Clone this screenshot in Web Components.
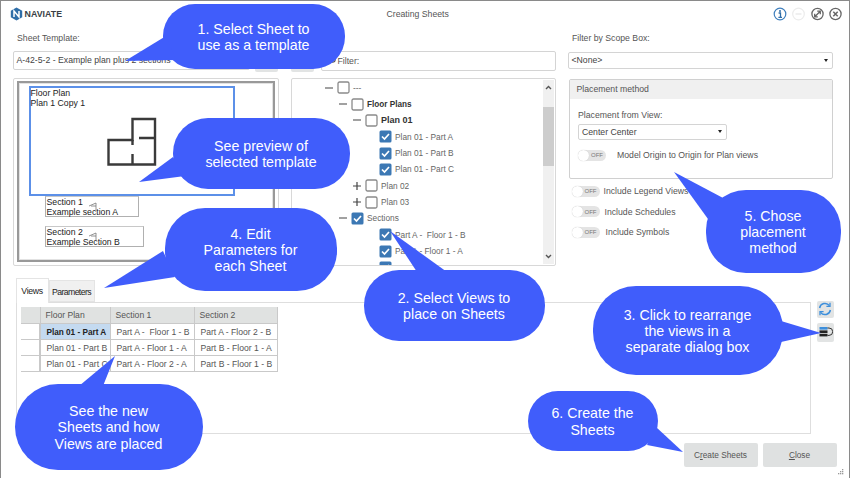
<!DOCTYPE html>
<html>
<head>
<meta charset="utf-8">
<title>Creating Sheets</title>
<style>
	html, body { margin: 0; padding: 0; background: white; }
	body { width: 850px; height: 478px; overflow: hidden; font: 8.7px "Liberation Sans", Arial, sans-serif; color: #555; }
</style>
</head>
<body>
<sheet-window>
	<win-title slot="title">Creating Sheets</win-title>

	<span slot="label-left">Sheet Template:</span>
	<span slot="label-right">Filter by Scope Box:</span>

	<win-combo slot="template" style="width:237px;height:19px">A-42-5-2 - Example plan plus 2 sections</win-combo>
	<filter-box slot="filter"></filter-box>
	<win-combo slot="scope" arrow style="height:17px;margin-top:1px">&lt;None&gt;</win-combo>

	<sheet-preview slot="preview"></sheet-preview>

	<view-tree slot="tree">
		<tree-row level="0" exp="minus">---</tree-row>
		<tree-row level="1" exp="minus" bold>Floor Plans</tree-row>
		<tree-row level="2" exp="minus" bold>Plan 01</tree-row>
		<tree-row level="3" checked>Plan 01 - Part A</tree-row>
		<tree-row level="3" checked>Plan 01 - Part B</tree-row>
		<tree-row level="3" checked>Plan 01 - Part C</tree-row>
		<tree-row level="2" exp="plus">Plan 02</tree-row>
		<tree-row level="2" exp="plus">Plan 03</tree-row>
		<tree-row level="1" exp="minus" checked>Sections</tree-row>
		<tree-row level="3" checked>Part A -  Floor 1 - B</tree-row>
		<tree-row level="3" checked>Part A - Floor 1 - A</tree-row>
		<tree-row level="3" checked></tree-row>
	</view-tree>

	<placement-panel slot="placement"></placement-panel>

	<sheet-table slot="table"></sheet-table>

	<side-button slot="side" kind="refresh" style="height:17px"></side-button>
	<side-button slot="side" kind="arrange" style="height:19px"></side-button>

	<win-button slot="buttons"><span>C<u>r</u>eate Sheets</span></win-button>
	<win-button slot="buttons"><span><u>C</u>lose</span></win-button>

	<note-bubble slot="notes" box="163,4,182,65,32" tail="166,36 125,61 176,60">1. Select Sheet to<br>use as a template</note-bubble>
	<note-bubble slot="notes" box="173,118,177,71,35" tail="173,157 139,182 185,176">See preview of<br>selected template</note-bubble>
	<note-bubble slot="notes" box="165,208,172,83,40" tail="163,251 104,288 175,277">4. Edit<br>Parameters for<br>each Sheet</note-bubble>
	<note-bubble slot="notes" box="364,270,181,71,35" tail="417,272 390,231 447,272">2. Select Views to<br>place on Sheets</note-bubble>
	<note-bubble slot="notes" box="593,286,190,89,43" tail="781,321 821,333 781,342">3. Click to rearrange<br>the views in a<br>separate dialog box</note-bubble>
	<note-bubble slot="notes" box="706,190,135,83,40" tail="725,199 674,172 708,219">5. Chose<br>placement<br>method</note-bubble>
	<note-bubble slot="notes" box="528,391,130,60,30" tail="656,427 683,452 647,445">6. Create the<br>Sheets</note-bubble>
	<note-bubble slot="notes" box="15,384,188,86,43" tail="79,386 115,356 103,386">See the new<br>Sheets and how<br>Views are placed</note-bubble>
</sheet-window>

<script>
"use strict"

function shadow(el, html) {
	el.attachShadow({ mode: "open" }).innerHTML = html
}

class SheetWindow extends HTMLElement {
	constructor() {
		super()
		shadow(this, `
			<style>
				:host {
					display: flex;
					flex-direction: column;
					position: relative;
					box-sizing: border-box;
					width: 850px;
					height: 478px;
					border: 1.5px solid #8a8a8a;
					border-bottom: 0;
				}
				.top {
					display: grid;
					grid-template-columns: 266px 265px 265px;
					grid-template-rows: 23px 27px 188px;
					column-gap: 12px;
					padding-left: 11.5px;
				}
				.label { line-height: 20px; padding-left: 4.5px; }
				.right { margin: 1px 0 0 1px; }
				.cell { display: flex; gap: 5px; align-items: flex-start; }
				.stub {
					width: 23px;
					height: 21px;
					background: #e2e4e4;
					border-radius: 2px;
				}
				.filter-cell { gap: 7px; }
				.bottom {
					display: flex;
					margin: 12px 0 0 14.5px;
					gap: 6px;
				}
				.tabs-wrap { width: 795px; display: flex; flex-direction: column; }
				.strip { display: flex; height: 24px; align-items: flex-end; }
				.tab {
					box-sizing: border-box;
					color: #222;
					text-align: center;
				}
				.tab.on {
					position: relative;
					width: 33px;
					height: 25px;
					line-height: 24px;
					letter-spacing: -.35px;
					margin-bottom: -1px;
					background: white;
					border: 1px solid #e4e4e4;
					border-bottom: 0;
				}
				.tab.off {
					width: 46px;
					height: 22px;
					line-height: 22px;
					letter-spacing: -.6px;
					background: #f0f0f0;
					border: 1px solid #e4e4e4;
				}
				.pane {
					box-sizing: border-box;
					height: 132px;
					border: 1px solid #dedede;
					padding: 4px;
				}
				.side {
					display: flex;
					flex-direction: column;
					gap: 5px;
					padding-top: 23px;
				}
				.foot {
					display: flex;
					justify-content: flex-end;
					gap: 5px;
					margin-top: 9px;
					padding-right: 12.5px;
				}
				.grip { position: absolute; right: 5px; bottom: 2px; }
			</style>
			<slot name="title"></slot>
			<div class="top">
				<div class="label"><slot name="label-left"></slot></div>
				<div></div>
				<div class="label"><slot name="label-right"></slot></div>
				<div class="cell"><slot name="template"></slot><div class="stub"></div></div>
				<div class="cell filter-cell"><div class="stub"></div><slot name="filter"></slot></div>
				<div class="cell" style="display:block"><slot name="scope"></slot></div>
				<slot name="preview"></slot>
				<slot name="tree"></slot>
				<div class="right"><slot name="placement"></slot></div>
			</div>
			<div class="bottom">
				<div class="tabs-wrap">
					<div class="strip">
						<div class="tab on">Views</div>
						<div class="tab off">Parameters</div>
					</div>
					<div class="pane"><slot name="table"></slot></div>
				</div>
				<div class="side"><slot name="side"></slot></div>
			</div>
			<div class="foot"><slot name="buttons"></slot></div>
			<svg class="grip" width="7" height="7" fill="#999">
				<rect x="5" y="0" width="1.3" height="1.3"/>
				<rect x="3" y="2" width="1.3" height="1.3"/><rect x="5" y="2" width="1.3" height="1.3"/>
				<rect x="1" y="4" width="1.3" height="1.3"/><rect x="3" y="4" width="1.3" height="1.3"/><rect x="5" y="4" width="1.3" height="1.3"/>
			</svg>
			<slot name="notes"></slot>
		`)
	}
}

class WinTitle extends HTMLElement {
	constructor() {
		super()
		shadow(this, `
			<style>
				:host {
					display: grid;
					grid-template-columns: 377px auto 1fr;
					align-items: center;
					height: 26.5px;
					padding: 0 7px 0 8.5px;
				}
				.logo { display: flex; align-items: center; gap: 2px; }
				.brand { font-size: 8.8px; font-weight: bold; color: #3a3f45; letter-spacing: .05px; }
				.icons { display: flex; justify-content: flex-end; gap: 5.5px; }
			</style>
			<div class="logo">
				<svg width="13" height="14" viewBox="0 0 13 14">
					<path d="M6.5 .5 12.2 3.7V10.3L6.5 13.5 .8 10.3V3.7Z" fill="#2f6ea8"/>
					<path d="M4 10V4L9 10V4" fill="none" stroke="#fff" stroke-width="1.5"/>
				</svg>
				<span class="brand">NAVIATE</span>
			</div>
			<div class="name"><slot></slot></div>
			<div class="icons">
				<svg width="14" height="14" viewBox="0 0 14 14">
					<circle cx="7" cy="7" r="5.8" fill="none" stroke="#3f7fbd" stroke-width="1.2"/>
					<path d="M5.6 6H7.5V10.2M5.4 10.4H9" fill="none" stroke="#2f6ea8" stroke-width="1.3"/>
					<circle cx="7" cy="3.9" r="1" fill="#2f6ea8"/>
				</svg>
				<svg width="13" height="14" viewBox="0 0 13 14">
					<circle cx="6.5" cy="7" r="5.8" fill="none" stroke="#ececec" stroke-width="1.2"/>
					<path d="M3.5 7H9.5" stroke="#e6e6e6" stroke-width="1.2"/>
				</svg>
				<svg width="13" height="14" viewBox="0 0 13 14">
					<circle cx="6.5" cy="7" r="5.6" fill="none" stroke="#666" stroke-width="1.3"/>
					<path d="M4 9.5 9 4.5M6.2 4.2H9.3V7.3M3.7 6.7V9.8H6.8" fill="none" stroke="#666" stroke-width="1.3"/>
				</svg>
				<svg width="13" height="14" viewBox="0 0 13 14">
					<circle cx="6.5" cy="7" r="5.6" fill="none" stroke="#666" stroke-width="1.3"/>
					<path d="M4.3 4.8 8.7 9.2M8.7 4.8 4.3 9.2" stroke="#666" stroke-width="1.5"/>
				</svg>
			</div>
		`)
	}
}

class WinCombo extends HTMLElement {
	constructor() {
		super()
		shadow(this, `
			<style>
				:host {
					display: flex;
					align-items: center;
					justify-content: space-between;
					box-sizing: border-box;
					background: white;
					border: 1px solid #d4d4d4;
					border-radius: 2px;
					padding: 0 4px 0 3px;
					color: #444;
				}
				i {
					width: 0;
					height: 0;
					border: 2.5px solid transparent;
					border-top: 3px solid #222;
					border-bottom: 0;
				}
			</style>
			<span><slot></slot></span>
			${this.hasAttribute("arrow") ? "<i></i>" : ""}
		`)
	}
}

class FilterBox extends HTMLElement {
	constructor() {
		super()
		shadow(this, `
			<style>
				:host {
					display: flex;
					align-items: center;
					gap: 2px;
					box-sizing: border-box;
					width: 235px;
					height: 20px;
					background: white;
					border: 1px solid #d4d4d4;
					border-radius: 2px;
					padding-left: 5px;
				}
			</style>
			<svg width="9" height="9" viewBox="0 0 9 9" fill="none" stroke="#555" stroke-width="1.1">
				<circle cx="5.5" cy="3.5" r="2.7"/><path d="M3.5 5.5 .8 8.2"/>
			</svg>
			<span>Filter:</span>
		`)
	}
}

class SheetPreview extends HTMLElement {
	constructor() {
		super()
		shadow(this, `
			<style>
				:host {
					display: block;
					box-sizing: border-box;
					border: 1px solid #d8d8d8;
					border-radius: 2px;
					padding: 2px 3px 3px;
					color: #222;
				}
				.sheet {
					position: relative;
					box-sizing: border-box;
					height: 100%;
					border: 2px solid #999;
					box-shadow: inset 0 0 0 1px #e2e2e2;
					background: white;
				}
				.view {
					position: absolute;
					box-sizing: border-box;
					line-height: 10.5px;
				}
				.plan {
					left: 10px; top: 3px;
					width: 206px; height: 110px;
					border: 2px solid #5c90e8;
				}
				.sec { border: 1px solid #b0b0b0; border-top-color: #c8c8c8; background: white; padding-left: 1px; }
				.plan svg { position: absolute; left: 76px; top: 29px; }
				.sec svg { position: absolute; left: 42px; top: 5px; }
			</style>
			<div class="sheet">
				<div class="view sec" style="left:26px;top:113px;width:94px;height:21.5px">Section 1<br>Example section A
					<svg width="10" height="9" fill="none" stroke="#777" stroke-width=".8"><path d="M1 4 8 1V8M8 4H3"/></svg>
				</div>
				<div class="view sec" style="left:26px;top:143px;width:99px;height:21.5px">Section 2<br>Example Section B
					<svg width="10" height="9" fill="none" stroke="#777" stroke-width=".8"><path d="M1 4 8 1V8M8 4H3"/></svg>
				</div>
				<div class="view plan">Floor Plan<br>Plan 1 Copy 1
					<svg width="50" height="50" viewBox="0 0 50 50" fill="none" stroke="#3a3a3a" stroke-width="2.4">
						<path d="M1.5 23H25.5V2H48V47.5H1.5Z"/>
						<path d="M25.5 23V28M32 21H48M25.5 37V47.5"/>
					</svg>
				</div>
			</div>
		`)
	}
}

class ViewTree extends HTMLElement {
	constructor() {
		super()
		shadow(this, `
			<style>
				:host {
					display: flex;
					box-sizing: border-box;
					height: 188px;
					border: 1px solid #d8d8d8;
					border-radius: 2px;
					overflow: hidden;
				}
				.rows { flex: 1; padding-top: 1px; overflow: hidden; }
				.bar {
					width: 11px;
					margin: 1px 1px 1px 0;
					background: #f0f0f0;
					display: flex;
					flex-direction: column;
					align-items: center;
				}
				.bar svg { flex: none; margin: 5px 0; }
				.thumb { width: 11px; height: 59px; background: #cdcdcd; margin: 12px 0 auto; }
			</style>
			<div class="rows"><slot></slot></div>
			<div class="bar">
				<svg width="7" height="5" fill="none" stroke="#555" stroke-width="1.4"><path d="M1 4 3.5 1.5 6 4"/></svg>
				<div class="thumb"></div>
				<svg width="7" height="5" fill="none" stroke="#555" stroke-width="1.4"><path d="M1 1 3.5 3.5 6 1"/></svg>
			</div>
		`)
	}
}

class TreeRow extends HTMLElement {
	constructor() {
		super()
		const level = Number(this.getAttribute("level"))
		const exp = this.getAttribute("exp")
		let expander = ""
		if (exp == "minus") expander = `<path d="M1 6H9" stroke="#444" stroke-width="1.2"/>`
		if (exp == "plus") expander = `<path d="M1 6H9M5 2V10" stroke="#444" stroke-width="1.2"/>`
		const box = this.hasAttribute("checked")
			? `<svg class="box" width="13" height="13"><rect x=".5" y=".5" width="12" height="12" rx="1.5" fill="#3c78b4"/><path d="M3 6.5 5.5 9 10 4" fill="none" stroke="#fff" stroke-width="1.7"/></svg>`
			: `<svg class="box" width="13" height="13"><rect x="1" y="1" width="11" height="11" rx="1.5" fill="#fff" stroke="#8a8a8a" stroke-width="1.3"/></svg>`
		shadow(this, `
			<style>
				:host {
					display: flex;
					align-items: center;
					height: 16.35px;
					padding-left: calc(32.5px + ${level} * 14px);
					color: #666;
					font-size: 8.3px;
					white-space: pre;
				}
				svg { flex: none; }
				.exp { margin-right: 3px; }
				span { margin-left: 3px; }
				:host([bold]) span { font-weight: bold; color: #333; font-size: 8.2px; }
				:host([level="2"][bold]) span { font-size: 9px; }
			</style>
			<svg class="exp" width="10" height="12">${expander}</svg>
			${box}
			<span><slot></slot></span>
		`)
	}
}

class PlacementPanel extends HTMLElement {
	constructor() {
		super()
		shadow(this, `
			<style>
				:host { display: block; color: #555; }
				.group {
					box-sizing: border-box;
					height: 100.5px;
					border: 1px solid #d0d0d0;
					border-radius: 2px;
				}
				.head {
					height: 19px;
					line-height: 19px;
					padding-left: 7px;
					background: #f0f0f0;
				}
				.body { padding: 11px 0 0 8.5px; }
				.from { line-height: 10px; }
				win-combo { width: 149px; height: 16px; margin-top: 4px; }
				.origin { display: flex; align-items: center; gap: 11px; margin-top: 10px; }
				.opts { padding: 6.5px 0 0 3px; display: flex; flex-direction: column; gap: 9.6px; }
				.opt { display: flex; align-items: center; height: 11px; }
			</style>
			<div class="group">
				<div class="head">Placement method</div>
				<div class="body">
					<div class="from">Placement from View:</div>
					<win-combo arrow>Center Center</win-combo>
					<div class="origin"><off-toggle></off-toggle><span>Model Origin to Origin for Plan views</span></div>
				</div>
			</div>
			<div class="opts">
				<div class="opt" style="gap:4px"><off-toggle></off-toggle><span>Include Legend Views</span></div>
				<div class="opt" style="gap:5px"><off-toggle></off-toggle><span>Include Schedules</span></div>
				<div class="opt" style="gap:6px"><off-toggle></off-toggle><span>Include Symbols</span></div>
			</div>
		`)
	}
}

class OffToggle extends HTMLElement {
	constructor() {
		super()
		shadow(this, `
			<style>
				:host {
					display: flex;
					align-items: center;
					justify-content: space-between;
					flex: none;
					box-sizing: border-box;
					width: 28px;
					height: 11px;
					background: #e4e4e4;
					border-radius: 6px;
					padding: 0 3px 0 0;
					font-size: 6px;
					color: #777;
				}
				i { width: 11px; height: 11px; background: #fff; border-radius: 50%; box-shadow: 0 0 1px #bbb; }
			</style>
			<i></i><span>OFF</span>
		`)
	}
}

const TABLE_ROWS = [
	["Plan 01 - Part A", "Part A -  Floor 1 - B", "Part A - Floor 2 - B"],
	["Plan 01 - Part B", "Part A - Floor 1 - A", "Part B - Floor 1 - A"],
	["Plan 01 - Part C", "Part A - Floor 2 - A", "Part B - Floor 1 - B"]
]

class SheetTable extends HTMLElement {
	constructor() {
		super()
		let cells = `<div class="h"></div><div class="h">Floor Plan</div><div class="h">Section 1</div><div class="h">Section 2</div>`
		TABLE_ROWS.forEach((row, i) => {
			cells += `<div class="r"></div>`
			row.forEach((text, j) => {
				cells += `<div class="c${i == 0 && j == 0 ? " sel" : ""}">${text}</div>`
			})
		})
		shadow(this, `
			<style>
				:host {
					display: grid;
					grid-template-columns: 20px 70px 84px 83px;
					grid-template-rows: 17px repeat(3, 16.3px);
					width: 257px;
					color: #555;
					white-space: pre;
					font-size: 8.6px;
				}
				div {
					box-sizing: border-box;
					border-right: 1px solid #c9c9c9;
					border-bottom: 1px solid #c9c9c9;
					line-height: 17px;
					padding-left: 6px;
					overflow: hidden;
				}
				.h { background: #e0e2e1; padding-left: 5px; }
				.r { border-right: 2px solid #c9c9c9; }
				.sel { background: #c4daf0; color: #222; font-weight: bold; font-size: 8.2px; }
			</style>
			${cells}
		`)
	}
}

class SideButton extends HTMLElement {
	constructor() {
		super()
		const refresh = `
			<svg width="14" height="14" viewBox="0 0 14 14" fill="none" stroke="#3d8fdc" stroke-width="1.5">
				<path d="M1.6 6A5.5 5.5 0 0 1 11.4 3.6M12.4 8A5.5 5.5 0 0 1 2.6 10.4"/>
				<path d="M12 .8V4.4H8.4M2 13.2V9.6H5.6" stroke-width="1.3"/>
			</svg>`
		const arrange = `
			<svg width="15" height="10" viewBox="0 0 15 10">
				<rect x="1.5" y="0" width="8" height="2.6" fill="#3d8fdc"/>
				<rect x="1.5" y="3.4" width="8" height="2.6" fill="#222"/>
				<rect x="1.5" y="6.8" width="8" height="2.6" fill="#222"/>
				<path d="M9.5 1H11A3.7 3.7 0 0 1 11 8.4H9.5" fill="none" stroke="#333" stroke-width="1"/>
			</svg>`
		shadow(this, `
			<style>
				:host {
					display: flex;
					align-items: center;
					justify-content: center;
					width: 17px;
					background: #e2e4e4;
					border-radius: 2px;
				}
			</style>
			${this.getAttribute("kind") == "refresh" ? refresh : arrange}
		`)
	}
}

class WinButton extends HTMLElement {
	constructor() {
		super()
		shadow(this, `
			<style>
				:host {
					display: flex;
					align-items: center;
					justify-content: center;
					width: 74px;
					height: 24px;
					background: #dfe1e1;
					border-radius: 2px;
					color: #555;
					font-size: 8.3px;
				}
			</style>
			<slot></slot>
		`)
	}
}

class NoteBubble extends HTMLElement {
	constructor() {
		super()
		const [x, y, w, h, r] = this.getAttribute("box").split(",").map(Number)
		shadow(this, `
			<style>
				:host {
					position: absolute;
					left: -1.5px;
					top: -1.5px;
					width: 850px;
					height: 478px;
					pointer-events: none;
				}
				svg { position: absolute; left: 0; top: 0; }
				.text {
					position: absolute;
					left: ${x}px;
					top: ${y + 1}px;
					width: ${w}px;
					height: ${h}px;
					display: flex;
					align-items: center;
					justify-content: center;
					text-align: center;
					font-size: 14.2px;
					line-height: 16.3px;
					color: #fff;
				}
			</style>
			<svg width="850" height="478" fill="#405dfb">
				<rect x="${x}" y="${y}" width="${w}" height="${h}" rx="${r}" ry="${r}"/>
				<polygon points="${this.getAttribute("tail")}"/>
			</svg>
			<div class="text"><div><slot></slot></div></div>
		`)
	}
}

customElements.define("sheet-window", SheetWindow)
customElements.define("win-title", WinTitle)
customElements.define("win-combo", WinCombo)
customElements.define("filter-box", FilterBox)
customElements.define("sheet-preview", SheetPreview)
customElements.define("view-tree", ViewTree)
customElements.define("tree-row", TreeRow)
customElements.define("placement-panel", PlacementPanel)
customElements.define("off-toggle", OffToggle)
customElements.define("sheet-table", SheetTable)
customElements.define("side-button", SideButton)
customElements.define("win-button", WinButton)
customElements.define("note-bubble", NoteBubble)
</script>
</body>
</html>
